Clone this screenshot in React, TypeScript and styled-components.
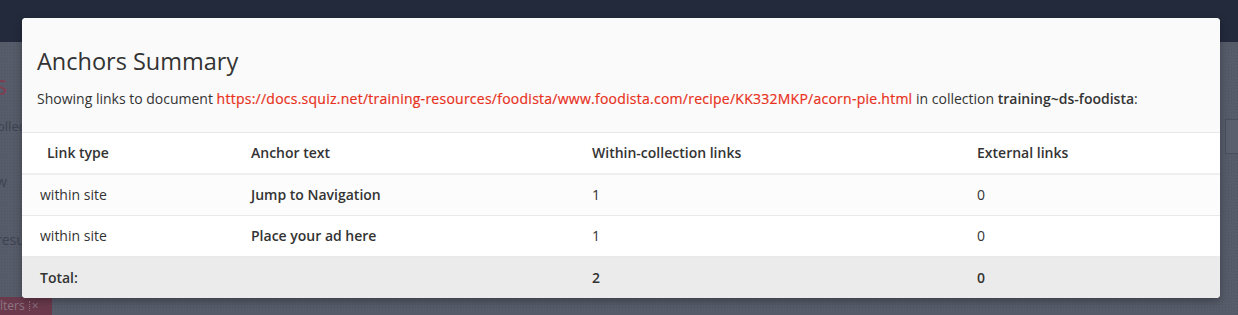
import React from 'react'
import styled, { createGlobalStyle } from 'styled-components';

const GlobalStyle = createGlobalStyle`
  html, body {
    margin: 0;
    padding: 0;
    height: 100%;
  }
  body {
    font-family: "Open Sans", "Noto Sans", "Liberation Sans", sans-serif;
    background: #585d6b;
    overflow: hidden;
  }
`;

interface LinkRow {
  type: string;
  anchor: string;
  within: number;
  external: number;
}

const rows: LinkRow[] = [
  { type: 'within site', anchor: 'Jump to Navigation', within: 1, external: 0 },
  { type: 'within site', anchor: 'Place your ad here', within: 1, external: 0 },
];

const App = () => {
  const totalWithin = rows.reduce((sum, r) => sum + r.within, 0);
  const totalExternal = rows.reduce((sum, r) => sum + r.external, 0);

  return (
    <>
      <GlobalStyle />
      <Page>
        <TopBar />
        <PageBody>
          <PageHeading>s</PageHeading>
          <GhostInput>ollec</GhostInput>
          <GhostText>w</GhostText>
          <GhostText>resu</GhostText>
          <FilterTag>ilters <TagSep /> ×</FilterTag>
          <GhostBox />
        </PageBody>
      </Page>

      <Modal>
        <ModalHeader>
          <Title>Anchors Summary</Title>
          <Subtitle>
            Showing links to document{' '}
            <DocLink href="#">https://docs.squiz.net/training-resources/foodista/www.foodista.com/recipe/KK332MKP/acorn-pie.html</DocLink>
            {' '}in collection <strong>training~ds-foodista</strong>:
          </Subtitle>
        </ModalHeader>
        <Table>
          <colgroup>
            <col style={{ width: 211 }} />
            <col style={{ width: 341 }} />
            <col style={{ width: 385 }} />
            <col />
          </colgroup>
          <thead>
            <tr>
              <Th $first>Link type</Th>
              <Th>Anchor text</Th>
              <Th>Within-collection links</Th>
              <Th>External links</Th>
            </tr>
          </thead>
          <tbody>
            {rows.map((r, i) => (
              <BodyRow key={i} $striped={i % 2 === 0}>
                <Td>{r.type}</Td>
                <Td $bold>{r.anchor}</Td>
                <Td>{r.within}</Td>
                <Td>{r.external}</Td>
              </BodyRow>
            ))}
            <TotalRow>
              <Td $bold>Total:</Td>
              <Td />
              <Td $bold>{totalWithin}</Td>
              <Td $bold>{totalExternal}</Td>
            </TotalRow>
          </tbody>
        </Table>
      </Modal>
    </>
  )
}

export default App;

const Page = styled.div`
  width: 1238px;
  height: 315px;
  display: flex;
  flex-direction: column;
`;

const TopBar = styled.div`
  height: 42px;
  background: #232a3c;
`;

const PageBody = styled.div`
  position: relative;
  flex: 1;
  background-color: #575c6a;
  background-image: radial-gradient(rgba(0, 0, 0, 0.08) 1px, transparent 1px);
  background-size: 3px 3px;
  display: flex;
  flex-direction: column;
`;

const PageHeading = styled.div`
  margin: 24px 0 0 -6px;
  font-size: 28px;
  line-height: 36px;
  color: #7e3f52;
`;

const GhostInput = styled.div`
  margin: 14px 0 0 -3px;
  font-size: 13px;
  line-height: 20px;
  color: #3e4350;
`;

const GhostText = styled.div`
  margin: 36px 0 0 -4px;
  font-size: 14px;
  line-height: 20px;
  color: #3e4350;

  & + & {
    margin-top: 38px;
  }
`;

const FilterTag = styled.div`
  position: absolute;
  left: 0;
  bottom: 0;
  height: 18px;
  width: 52px;
  background: #6a3a4c;
  color: #8d7683;
  font-size: 12px;
  line-height: 18px;
  display: flex;
  align-items: center;
  gap: 4px;
  overflow: hidden;
  text-indent: -3px;
`;

const TagSep = styled.span`
  width: 1px;
  height: 10px;
  border-left: 1px dotted #8d7683;
`;

const GhostBox = styled.div`
  position: absolute;
  right: -2px;
  top: 77px;
  width: 14px;
  height: 33px;
  border: 1px solid #4a4f5c;
  border-right: none;
  background: #5b606e;
`;

const Modal = styled.div`
  position: absolute;
  top: 18px;
  left: 22px;
  width: 1198px;
  background: #fff;
  border-radius: 4px;
  overflow: hidden;
  box-shadow: 0 3px 9px rgba(0, 0, 0, 0.3);
`;

const ModalHeader = styled.div`
  background: #fafafa;
  padding: 27px 15px 23px;
  border-bottom: 1px solid #e8e8e8;
`;

const Title = styled.h4`
  margin: 0 0 12px;
  font-size: 23.5px;
  font-weight: 400;
  line-height: 32px;
  color: #333;
`;

const Subtitle = styled.p`
  margin: 0;
  font-size: 14px;
  line-height: 20px;
  color: #333;

  strong {
    font-weight: 600;
  }
`;

const DocLink = styled.a`
  color: #e8301c;
  letter-spacing: 0.25px;
  -webkit-text-stroke: 0.2px #e8301c;
  text-decoration: none;
`;

const Table = styled.table`
  width: 100%;
  border-collapse: collapse;
  table-layout: fixed;
  font-size: 14px;
  color: #333;
`;

const Th = styled.th<{ $first?: boolean }>`
  text-align: left;
  font-weight: 600;
  padding: 11px 18px 11px;
  padding-left: ${({ $first }) => ($first ? '25px' : '18px')};
  line-height: 18px;
  background: #fff;
  border-bottom: 2px solid #eee;
`;

const Td = styled.td<{ $bold?: boolean }>`
  padding: 11px 18px 11px;
  line-height: 18px;
  font-weight: ${({ $bold }) => ($bold ? 600 : 400)};
`;

const BodyRow = styled.tr<{ $striped: boolean }>`
  background: ${({ $striped }) => ($striped ? '#fcfcfc' : '#fff')};
  border-bottom: 1px solid #e9e9e9;
`;

const TotalRow = styled.tr`
  background: #ebebeb;

  ${Td} {
    padding-top: 12px;
    padding-bottom: 11px;
  }
`;
